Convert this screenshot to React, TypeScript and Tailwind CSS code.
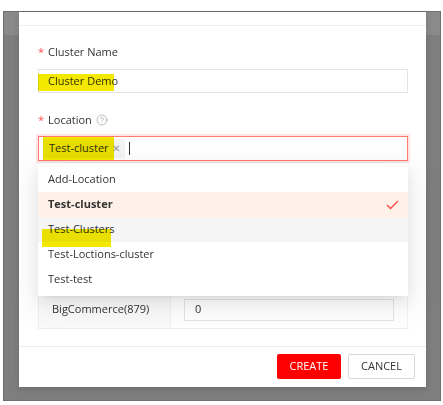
import { CircleHelp } from "lucide-react";

const font = { fontFamily: '"Open Sans", "Noto Sans", sans-serif' };

function Label({ text, help }: { text: string; help?: boolean }) {
  return (
    <div className="flex h-4 items-center text-[11px] leading-4 text-[#333]">
      <span className="mr-[4px] text-[#ff4d4f]">*</span>
      <span>{text}</span>
      {help && <CircleHelp className="ml-[4px] h-[12px] w-[12px] text-[#a8a8a8]" strokeWidth={1.5} />}
    </div>
  );
}

const options = ["Add-Location", "Test-cluster", "Test-Clusters", "Test-Loctions-cluster", "Test-test"];

export default function App() {
  return (
    <div className="h-[405px] w-[443px] bg-white pl-[3px] pt-[11px]" style={font}>
      <div className="h-[390px] w-[438px] border border-[#6e6e6e] bg-[linear-gradient(#8a8a8a_0_23px,#7e7e7e_23px)] pl-[15px] pr-[14px]">
        <div className="flex h-[375px] flex-col bg-white shadow-[0_2px_6px_rgba(0,0,0,0.15)]">
          {/* header (scrolled off) */}
          <div className="h-[14px] border-b border-[#ededed]" />

          {/* body */}
          <div className="flex-1 pl-[19px] pr-[18px] pt-[18px]">
            <Label text="Cluster Name" />
            <div className="relative mt-[9px] flex h-6 items-center border border-[#e4e4e4] pl-[9px] text-[11px] text-[#333]">
              <span className="absolute left-[-1px] top-[4px] h-[17px] w-[76px] bg-[#f3e900] mix-blend-multiply" />
              Cluster Demo
            </div>

            <div className="mt-[19px]">
              <Label text="Location" help />
            </div>
            <div className="relative mt-2">
              <div className="flex h-[25px] items-center border border-[#ff7b6e] pl-[4px] text-[11px] text-[#333] shadow-[0_0_0_2px_rgba(255,77,79,0.15)]">
                <span className="relative flex h-[19px] items-center bg-[#f3f3f3] pl-[6px] pr-[5px]">
                  <span className="absolute left-[0px] top-[-2px] h-[23px] w-[71px] bg-[#f3e900] mix-blend-multiply" />
                  Test-cluster
                  <span className="ml-[3px] text-[10px] text-[#999]">✕</span>
                </span>
                <span className="ml-[4px] h-[13px] w-px bg-[#333]" />
              </div>

              {/* dropdown */}
              <div className="absolute left-0 right-0 top-[27px] z-10 bg-white py-1 shadow-[0_3px_6px_-4px_rgba(0,0,0,0.12),0_6px_16px_rgba(0,0,0,0.08),0_9px_28px_8px_rgba(0,0,0,0.05)]">
                {options.map((o) => (
                  <div
                    key={o}
                    className={[
                      "relative flex h-[25px] items-center justify-between pl-[10px] pr-[9px] text-[11px] text-[#333]",
                      o === "Test-cluster" ? "bg-[#fff1e8] font-bold" : "",
                      o === "Test-Clusters" ? "bg-[#f5f5f5]" : "",
                    ].join(" ")}
                  >
                    {o === "Test-Clusters" && (
                      <span className="absolute left-[4px] top-[12px] h-[18px] w-[69px] bg-[#f3e900] mix-blend-multiply" />
                    )}
                    <span>{o}</span>
                    {o === "Test-cluster" && (
                      <svg width="13" height="10" viewBox="0 0 13 10" fill="none">
                        <path d="M1 5l3.5 3.5L12 1" stroke="#ff4d4f" strokeWidth="1.4" />
                      </svg>
                    )}
                  </div>
                ))}
              </div>
            </div>

            {/* channel table, mostly under the open dropdown */}
            <div className="mt-[52px] border border-[#f0f0f0] text-[11px] text-[#333]">
              {["", "", "BigCommerce(879)"].map((name, i) => (
                <div key={i} className={`flex h-[38px] ${i > 0 ? "border-t border-[#f0f0f0]" : ""}`}>
                  <div className="flex w-[132px] items-center border-r border-[#f0f0f0] bg-[#fafafa] pl-[13px]">{name}</div>
                  <div className="flex flex-1 items-center px-[13px]">
                    {name && (
                      <div className="flex h-[22px] w-full items-center border border-[#e4e4e4] pl-[10px]">0</div>
                    )}
                  </div>
                </div>
              ))}
            </div>
          </div>

          {/* footer */}
          <div className="flex justify-end gap-[7px] border-t border-[#ededed] pb-2 pr-[11px] pt-[7px] text-[11px]">
            <button className="h-[25px] w-[64px] rounded-[2px] bg-[#ff0000] text-white">CREATE</button>
            <button className="h-[25px] w-[67px] rounded-[2px] border border-[#d9d9d9] bg-white text-[#333]">CANCEL</button>
          </div>
        </div>
      </div>
    </div>
  );
}
